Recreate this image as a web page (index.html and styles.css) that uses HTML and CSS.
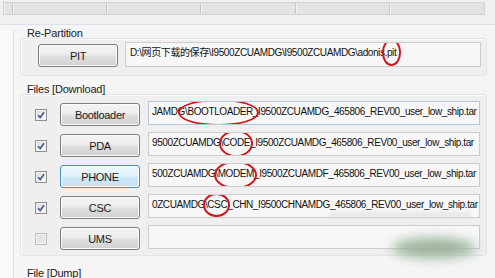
FILE: index.html
```html
<!DOCTYPE html>
<html lang="zh-CN">
<head>
  <meta charset="UTF-8" />
  <meta name="viewport" content="width=device-width, initial-scale=1.0" />
  <title>Odin</title>
  <link rel="stylesheet" href="styles.css">
</head>
<body>
  <div class="toolbar">
    <span class="cell small"></span>
    <span class="cell"></span>
    <span class="cell"></span>
    <span class="cell"></span>
    <span class="cell"></span>
    <span class="cell"></span>
  </div>

  <div class="frame">
    <div class="side"></div>
    <div class="groups">
      <div class="legend">Re-Partition</div>
      <div class="box repart">
        <button class="btn pit">PIT</button>
        <div class="field"><span class="path">D:\网页下载的保存\I9500ZCUAMDG\I9500ZCUAMDG\adonis<span class="mark m-pit">.pit</span></span></div>
      </div>

      <div class="legend files-title">Files [Download]</div>
      <div class="box files">
        <div class="row">
          <span class="check on"><svg viewBox="0 0 8 8"><path d="M1 4.2 L3.2 6.4 L7 1.2" /></svg></span>
          <button class="btn">Bootloader</button>
          <div class="field focus"><span class="path">JAMDG\<span class="mark m-boot">BOOTLOADER</span>_I9500ZCUAMDG_465806_REV00_user_low_ship.tar</span></div>
        </div>
        <div class="row">
          <span class="check on"><svg viewBox="0 0 8 8"><path d="M1 4.2 L3.2 6.4 L7 1.2" /></svg></span>
          <button class="btn">PDA</button>
          <div class="field"><span class="path">9500ZCUAMDG\<span class="mark m-code">CODE</span>_I9500ZCUAMDG_465806_REV00_user_low_ship.tar</span></div>
        </div>
        <div class="row">
          <span class="check on"><svg viewBox="0 0 8 8"><path d="M1 4.2 L3.2 6.4 L7 1.2" /></svg></span>
          <button class="btn hot">PHONE</button>
          <div class="field"><span class="path">500ZCUAMDG\<span class="mark m-modem">MODEM</span>_I9500ZCUAMDF_465806_REV00_user_low_ship.tar</span></div>
        </div>
        <div class="row">
          <span class="check on"><svg viewBox="0 0 8 8"><path d="M1 4.2 L3.2 6.4 L7 1.2" /></svg></span>
          <button class="btn">CSC</button>
          <div class="field"><span class="path">0ZCUAMDG\<span class="mark m-csc">CSC</span>_CHN_I9500CHNAMDG_465806_REV00_user_low_ship.tar</span></div>
        </div>
        <div class="row">
          <span class="check off"></span>
          <button class="btn">UMS</button>
          <div class="field"></div>
        </div>
      </div>

      <div class="legend dump">File [Dump]</div>
    </div>
  </div>

  <div class="smudge"></div>
  <div class="ghost"></div>
</body>
</html>
```

FILE: styles.css
```css
* {
  box-sizing: border-box;
}
body {
  margin: 0;
  width: 495px;
  height: 278px;
  overflow: hidden;
  background: #f0f0f0;
  font-family: "Liberation Sans", Arial, "Noto Sans CJK SC", sans-serif;
  font-size: 10.5px;
  color: #1a1a1a;
  position: relative;
}
.toolbar {
  display: flex;
  height: 13px;
  margin: 2px 0 0 3px;
  width: 482px;
  border: 1px solid #d2d2d2;
  background: #e3e3e3;
}
.cell {
  width: 95px;
  border-right: 1px solid #c6c6c6;
  border-left: 1px solid #f2f2f2;
}
.cell.small {
  width: 9px;
}
.cell:last-child {
  border-right: none;
}
.frame {
  display: flex;
  margin-top: 9px;
  border-top: 1px solid #d9e1ea;
  height: 254px;
  background: #f5f5f5;
}
.side {
  width: 14px;
  margin-top: 5px;
  border-right: 1px solid #e2e2e2;
  background: #f9f9f9;
}
.groups {
  margin-left: 6px;
  width: 467px;
}
.legend {
  padding-left: 7px;
  height: 13px;
  line-height: 13px;
  margin-top: 2px;
  font-size: 11px;
  letter-spacing: -0.2px;
  color: #222;
  position: relative;
}
.legend.files-title {
  margin-top: 7px;
}
.box {
  margin-top: -2px;
  border: 1px solid #e4e4e4;
  border-radius: 3px;
  background: #efefef;
  box-shadow: inset 1px 1px 0 #fafafa;
}
.repart {
  display: flex;
  align-items: flex-start;
  height: 38px;
  padding: 0 5px 0 17px;
}
.btn {
  font: inherit;
  font-size: 11px;
  letter-spacing: -0.3px;
  color: #1a1a1a;
  width: 80px;
  height: 23px;
  border: 1px solid #7d7d7d;
  border-radius: 3px;
  background: linear-gradient(#f4f4f4 0%, #ececec 48%, #dedede 52%, #d2d2d2 100%);
  box-shadow: inset 0 0 0 1px #fbfbfb;
  padding: 0;
  flex-shrink: 0;
}
.btn.pit {
  margin-top: 5px;
}
.btn.hot {
  border-color: #4c8bbb;
  background: linear-gradient(#eef7fd 0%, #e0f1fb 48%, #d0e9f8 52%, #c3e1f5 100%);
}
.field {
  flex: 1;
  height: 24px;
  margin-left: 7px;
  border: 1px solid #cdcdcd;
  background: #f7f7f7;
  overflow: hidden;
  padding: 0 3px;
}
.field.focus {
  border-color: #b7c8d9;
}
.repart .field {
  margin-top: 3px;
  height: 25px;
  padding-left: 4px;
}
.path {
  display: block;
  white-space: nowrap;
  font-size: 10px;
  line-height: 13px;
  padding-top: 3px;
  letter-spacing: -0.4px;
  color: #111;
}
.files {
  height: 162px;
  padding: 5px 6px 0 14px;
}
.row {
  display: flex;
  align-items: flex-start;
  height: 31px;
}
.check {
  width: 12px;
  height: 12px;
  margin: 9px 13px 0 0;
  border: 1px solid #8e8f8f;
  background: linear-gradient(135deg, #d9d9d9, #fbfbfb);
  box-shadow: inset 0 0 0 1px #f2f2f2;
  flex-shrink: 0;
  display: flex;
  align-items: center;
  justify-content: center;
}
.check svg {
  width: 8px;
  height: 8px;
  fill: none;
  stroke: #43578c;
  stroke-width: 1.6;
}
.check.off {
  border-color: #bdbdbd;
  background: #e4e4e4;
}
.row .btn {
  margin-top: 3px;
}
.row .field {
  margin-left: 8px;
  margin-top: 1px;
}
.mark {
  position: relative;
}
.mark::after {
  content: "";
  position: absolute;
  top: -6px;
  bottom: -7px;
  left: -4px;
  right: -3px;
  border: 2px solid #d3151d;
  border-radius: 50%;
}
.m-pit::after {
  left: -3px;
  right: -5px;
  top: -8px;
  bottom: -8px;
}
.m-boot::after {
  left: -9px;
  right: -6px;
  top: -7px;
  bottom: -9px;
}
.m-code::after {
  top: -7px;
  bottom: -9px;
}
.m-modem::after {
  top: -7px;
  bottom: -10px;
}
.legend.dump {
  margin-top: 11px;
}
.smudge {
  position: absolute;
  left: 392px;
  top: 238px;
  width: 84px;
  height: 20px;
  border-radius: 50%;
  background: #9bb39b;
  filter: blur(6px);
}
.ghost {
  position: absolute;
  left: 330px;
  top: 213px;
  width: 140px;
  height: 3px;
  background: #dadada;
  filter: blur(2px);
}
```
